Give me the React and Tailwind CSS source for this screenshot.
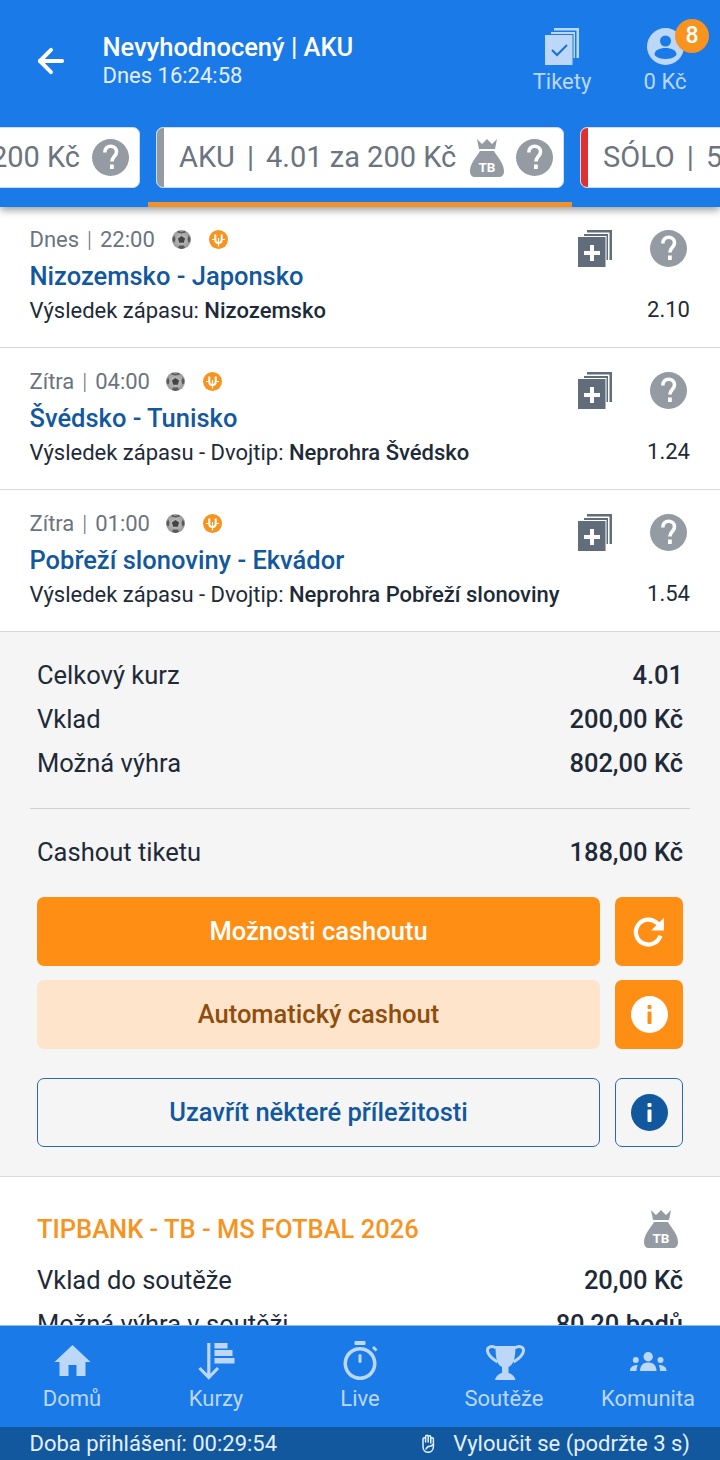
import { ArrowLeft } from 'lucide-react'

const font = { fontFamily: 'Roboto, sans-serif' }

function Bag({ color = '#949ba3' }) {
  return (
    <svg width="34" height="38" viewBox="0 0 34 38">
      <path d="M7 0l5 5 5-5 5 5 5-5-2 10H9z" fill={color} />
      <path d="M10 12h14c2 4 10 12 10 20 0 4-2 6-5 6H5c-3 0-5-2-5-6 0-8 8-16 10-20z" fill={color} />
      <text x="17" y="33" textAnchor="middle" fontSize="13.500" fontWeight="700" fill="#fff" fontFamily="Roboto, sans-serif">TB</text>
    </svg>
  )
}

function Help({ size = 37 }) {
  return (
    <svg width={size} height={size} viewBox="0 0 37 37">
      <circle cx="18.500" cy="18.500" r="18.500" fill="#949ba3" />
      <path d="M12.800 13.500c0-4 2.700-6.300 5.900-6.300s5.800 2.300 5.800 5.500c0 4.600-4.600 5-4.600 9.800" fill="none" stroke="#fff" strokeWidth="3.600" />
      <rect x="18" y="25.500" width="3.800" height="4.500" fill="#fff" />
    </svg>
  )
}

// three stacked sheets, shared by the ticket icons
function Sheets({ color, children }) {
  return (
    <svg width="34" height="37" viewBox="0 0 34 37">
      <path d="M9 0h25v30h-2.500V2.500H9z" fill={color} />
      <path d="M6 4h24v26h-1.500V6H6z" fill={color} />
      <rect x="0" y="7" width="27.500" height="30" fill={color} />
      {children}
    </svg>
  )
}

function Ball() {
  return (
    <svg width="19" height="19" viewBox="0 0 19 19">
      <defs>
        <radialGradient id="ball" cx="0.500" cy="0.500" r="0.600">
          <stop offset="0" stopColor="#c9c9c9" />
          <stop offset="1" stopColor="#8f8f8f" />
        </radialGradient>
      </defs>
      <circle cx="9.500" cy="9.500" r="9.500" fill="url(#ball)" />
      <path d="M9.500 6l3.600 2.500-1.300 4.300H7.200L5.900 8.500z" fill="#444" />
      <path d="M6 .8l3.500 1.300L13 .8l.8 1.600L9.500 3.500 5.200 2.400zM.6 8l1.800-2.600L3.500 9 2.600 12.500.8 11.500zM18.400 8l-1.800-2.600L15.500 9l.9 3.500 1.800-1zM6 18l1-2.500h5l1 2.500-3.500 1z" fill="#5a5a5a" />
    </svg>
  )
}

function Boost() {
  return (
    <svg width="19" height="19" viewBox="0 0 19 19">
      <circle cx="9.500" cy="9.500" r="9.500" fill="#f7931e" />
      <path d="M6.300 4.500v5.500c0 1.900 1.400 3 3.200 3s3.200-1.100 3.200-3V4.500" fill="none" stroke="#fff" strokeWidth="2" />
      <path d="M9.500 8v8.500M3 9.500h2.500M13.500 9.500H16" fill="none" stroke="#fff" strokeWidth="1.200" />
    </svg>
  )
}

function InfoDot({ bg, fg }) {
  return (
    <svg width="37" height="37" viewBox="0 0 37 37">
      <circle cx="18.500" cy="18.500" r="18.500" fill={bg} />
      <rect x="16.500" y="9" width="4" height="4" rx="1" fill={fg} />
      <rect x="16.500" y="15.500" width="4" height="12.500" rx="1" fill={fg} />
    </svg>
  )
}

function Tab({ accent, className, children }) {
  return (
    <div className={`h-[61px] shrink-0 rounded-[7px] bg-white flex items-center overflow-hidden border border-[#c9ddf5] ${className}`}>
      <div className="w-[7px] h-full shrink-0" style={{ background: accent }} />
      {children}
    </div>
  )
}

function Bet({ day, time, gap, teams, market, pick, odd }) {
  return (
    <div className="h-[142px] pl-[29.500px] pr-[30px] border-b border-[#d5d7da] bg-white flex relative">
      <div className="flex-1 min-w-0">
        <div className="flex items-center h-[26px] mt-[20px] text-[22px] text-[#6b7480]">
          <span>{day}</span>
          <span className="mx-[8px] font-light">|</span>
          <span>{time}</span>
          <span className={`flex items-center gap-[18px] ${gap}`}><Ball /><Boost /></span>
        </div>
        <div className="text-[25.500px] leading-[30px] font-medium text-[#12589f] mt-[9px]">{teams}</div>
        <div className="text-[22px] leading-[26px] text-[#1e2a38] mt-[7px] whitespace-nowrap">
          {market} <span className="font-medium">{pick}</span>
        </div>
      </div>
      <div className="w-[113px] shrink-0 flex flex-col items-end">
        <div className="flex items-center gap-[38px] mt-[24px] mr-[3px]">
          <Sheets color="#616d7a">
            <path d="M12 15h4v6h6v4h-6v6h-4v-6H6v-4h6z" fill="#fff" />
          </Sheets>
          <Help />
        </div>
        <div className="text-[22px] leading-[26px] text-[#1e2a38] mt-[30px]">{odd}</div>
      </div>
    </div>
  )
}

function Sum({ label, value }) {
  return (
    <div className="flex justify-between items-center h-[44px] px-[7px] text-[25.500px] text-[#1e2a38]">
      <span>{label}</span>
      <span className="font-medium">{value}</span>
    </div>
  )
}

function Btn({ className, children }) {
  return <div className={`flex-1 rounded-[7px] flex items-center justify-center text-[25.500px] font-medium ${className}`}>{children}</div>
}

function Side({ className, children }) {
  return <div className={`w-[68px] shrink-0 rounded-[7px] flex items-center justify-center ${className}`}>{children}</div>
}

const nav = [
  {
    label: 'Domů',
    icon: <path d="M18.500 1L.5 18h5v14h9V21h8v11h9V18h5z" />,
  },
  {
    label: 'Kurzy',
    icon: (
      <>
        <path d="M10.800 -1V33M1.500 24l9.300 9.500L20 24" fill="none" stroke="#bcd7f7" strokeWidth="3.200" />
        <rect x="16.500" y="-1" width="13" height="5.500" />
        <rect x="16.500" y="6" width="18" height="6" />
        <rect x="16.500" y="14" width="20" height="5.500" />
      </>
    ),
  },
  {
    label: 'Live',
    icon: (
      <>
        <rect x="12.500" y="-3" width="11" height="4" rx="1" />
        <path d="M18 3a16.500 16.500 0 1 0 .01 0zm0 3.500a13 13 0 1 1-.01 0z" fillRule="evenodd" />
        <rect x="16.500" y="10" width="3" height="9" rx="1.500" />
        <path d="M30 4l2-2 3.500 3.500-2 2z" />
      </>
    ),
  },
  {
    label: 'Soutěže',
    icon: (
      <>
        <path d="M9.500 2h20c0 12-2 19-7 21v6c3 .5 6 3 7 7H9c1-4 4-6.500 7-7v-6c-5-2-6.500-9-6.500-21z" />
        <path d="M10 4C6 1 1 3 1.500 7c.5 4 5 8 10 11M29 4c4-3 9-1 8.500 3-.5 4-5 8-10 11" fill="none" stroke="#bcd7f7" strokeWidth="3" />
      </>
    ),
  },
  {
    label: 'Komunita',
    icon: (
      <>
        <circle cx="18.200" cy="12.700" r="4.700" />
        <circle cx="5.800" cy="16" r="3" />
        <circle cx="30.500" cy="16" r="3" />
        <path d="M10 27c0-6 3.500-8.500 8.200-8.500s8.300 2.500 8.300 8.500zM0 27c0-3.500 2.500-6 7.800-6-.8 1.500-1.300 3.500-1.300 6zM36.500 27c0-3.500-2.500-6-7.800-6 .8 1.500 1.300 3.500 1.300 6z" />
      </>
    ),
  },
]

export default function App() {
  return (
    <div className="w-[720px] h-[1460px] overflow-hidden flex flex-col bg-white" style={font}>
      <header className="h-[207px] shrink-0 bg-[#1a7ae8] relative z-10 shadow-[0_3px_8px_rgba(0,0,0,0.4)] flex flex-col">
        <div className="h-[127px] flex items-start">
          <ArrowLeft size={38} strokeWidth={2.500} color="#fff" className="ml-[32px] mt-[42px]" />
          <div className="ml-[32.500px] mt-[32px] flex-1 text-white">
            <div className="text-[25.500px] leading-[30px] font-medium">Nevyhodnocený | AKU</div>
            <div className="text-[22px] leading-[28px] text-[#e3efff]">Dnes 16:24:58</div>
          </div>
          <div className="w-[120px] mt-[28px] flex flex-col items-center relative left-[12px]">
            <Sheets color="#bcd7f7">
              <path d="M7 22l5 5 10-10" fill="none" stroke="#1a6fd1" strokeWidth="2" />
            </Sheets>
            <span className="text-[22px] leading-[26px] text-[#bcd7f7] mt-[4px]">Tikety</span>
          </div>
          <div className="w-[110px] mt-[28px] flex flex-col items-center relative">
            <svg width="37" height="37" viewBox="0 0 37 37">
              <circle cx="18.500" cy="18.500" r="18.500" fill="#bcd7f7" />
              <circle cx="18.500" cy="13" r="5.500" fill="#1a7ae8" />
              <path d="M7.500 27c0-5 5-7 11-7s11 2 11 7c-3 3-7 4-11 4s-8-1-11-4z" fill="#1a7ae8" />
            </svg>
            <span className="text-[22px] leading-[26px] text-[#bcd7f7] mt-[4px]">0 Kč</span>
            <span className="absolute top-[-9px] left-[65px] w-[34px] h-[34px] rounded-full bg-[#f7931e] text-white text-[23px] font-medium flex items-center justify-center">8</span>
          </div>
        </div>
        <div className="flex gap-[16px] ml-[-260px] relative">
          <Tab accent="#949ba3" className="w-[400px]">
            <div className="flex-1 flex items-center justify-end gap-[12px] pr-[10px] text-[29px] text-[#6b7480]">
              <span className="whitespace-nowrap">200 Kč</span><Help />
            </div>
          </Tab>
          <Tab accent="#949ba3" className="w-[408px]">
            <span className="ml-[15px] text-[29px] text-[#6b7480] whitespace-nowrap">AKU<span className="mx-[12px]">|</span>4.01 za 200 Kč</span>
            <span className="ml-[14px]"><Bag /></span>
            <span className="ml-[12px]"><Help /></span>
          </Tab>
          <Tab accent="#e03131" className="w-[300px]">
            <span className="ml-[15px] text-[29px] text-[#6b7480] whitespace-nowrap">SÓLO<span className="mx-[12px]">|</span>5</span>
          </Tab>
        </div>
        <div className="h-[5px] w-[424px] ml-[148px] mt-auto bg-[#f0922c]" />
      </header>

      <main className="flex-1 min-h-0 overflow-hidden -mt-px">
        <Bet day="Dnes" time="22:00" gap="ml-[17px]" teams="Nizozemsko - Japonsko" market="Výsledek zápasu:" pick="Nizozemsko" odd="2.10" />
        <Bet day="Zítra" time="04:00" gap="ml-[16px]" teams="Švédsko - Tunisko" market="Výsledek zápasu - Dvojtip:" pick="Neprohra Švédsko" odd="1.24" />
        <Bet day="Zítra" time="01:00" gap="ml-[16px]" teams="Pobřeží slonoviny - Ekvádor" market="Výsledek zápasu - Dvojtip:" pick="Neprohra Pobřeží slonoviny" odd="1.54" />

        <section className="h-[545px] bg-[#f5f5f5] border-b border-[#dcdcdc] px-[30px] pt-[21px]">
          <Sum label="Celkový kurz" value="4.01" />
          <Sum label="Vklad" value="200,00 Kč" />
          <Sum label="Možná výhra" value="802,00 Kč" />
          <div className="h-px bg-[#cfd2d5] mt-[23px] mb-[21px]" />
          <Sum label="Cashout tiketu" value="188,00 Kč" />
          <div className="px-[7px] mt-[23px] flex flex-col">
            <div className="flex gap-[15px] h-[69px]">
              <Btn className="bg-[#ff8f14] text-white">Možnosti cashoutu</Btn>
              <Side className="bg-[#ff8f14]">
                <svg width="34" height="34" viewBox="0 0 24 24" fill="none" stroke="#fff" strokeWidth="3">
                  <path d="M20 14.500A8.800 8.800 0 1 1 17.500 5.500L21 9" />
                  <path d="M22.500 2v9h-9z" fill="#fff" stroke="none" />
                </svg>
              </Side>
            </div>
            <div className="flex gap-[15px] h-[69px] mt-[14px]">
              <Btn className="bg-[#ffe4cc] text-[#8f4e0c]">Automatický cashout</Btn>
              <Side className="bg-[#ff8f14]"><InfoDot bg="#fff" fg="#ff8f14" /></Side>
            </div>
            <div className="flex gap-[15px] h-[69px] mt-[29px]">
              <Btn className="border-[1.500px] border-[#2a6aa8] text-[#12589f]">Uzavřít některé příležitosti</Btn>
              <Side className="border-[1.500px] border-[#2a6aa8]"><InfoDot bg="#12589f" fg="#fff" /></Side>
            </div>
          </div>
        </section>

        <section className="px-[37px] pt-[33px]">
          <div className="flex justify-between items-center h-[38px]">
            <span className="text-[25.500px] font-medium text-[#f7931e]">TIPBANK - TB - MS FOTBAL 2026</span>
            <span className="mr-[5px]"><Bag /></span>
          </div>
          <div className="flex justify-between items-center h-[44px] mt-[10px] text-[25.500px] text-[#1e2a38]">
            <span>Vklad do soutěže</span>
            <span className="font-medium">20,00 Kč</span>
          </div>
          <div className="flex justify-between items-center h-[44px] text-[25.500px] text-[#1e2a38]">
            <span>Možná výhra v soutěži</span>
            <span className="font-medium">80,20 bodů</span>
          </div>
        </section>
      </main>

      <nav className="h-[102px] shrink-0 bg-[#1a7ae8] border-t border-[#8bbcf2] grid grid-cols-5 relative z-10">
        {nav.map((n) => (
          <div key={n.label} className="flex flex-col items-center pt-[18px]">
            <svg width="37" height="37" viewBox="0 0 37 37" fill="#bcd7f7" className="overflow-visible">{n.icon}</svg>
            <span className="text-[22px] leading-[26px] text-[#bcd7f7] mt-[5px]">{n.label}</span>
          </div>
        ))}
      </nav>
      <footer className="h-[33px] shrink-0 bg-[#12589f] pl-[29.500px] pr-[30px] flex items-center justify-between text-[22px] text-[#e3efff] relative z-10">
        <span>Doba přihlášení: 00:29:54</span>
        <span className="flex items-center gap-[16px]">
          <svg width="16" height="19" viewBox="0 0 16 19" fill="none" stroke="#e3efff" strokeWidth="1.500" strokeLinecap="round" strokeLinejoin="round">
            <path d="M2 10V5a1.300 1.300 0 0 1 2.600 0v3V2.500a1.300 1.300 0 0 1 2.600 0V8V3a1.300 1.300 0 0 1 2.600 0v6V5a1.300 1.300 0 0 1 2.600 0v7.500c0 3.500-2.400 5.800-5.300 5.800S2 16 2 12.500z" />
            <path d="M5 15c1-2.500 3-3 5-3l2.400-1.500" />
          </svg>
          Vyloučit se (podržte 3 s)
        </span>
      </footer>
    </div>
  )
}
